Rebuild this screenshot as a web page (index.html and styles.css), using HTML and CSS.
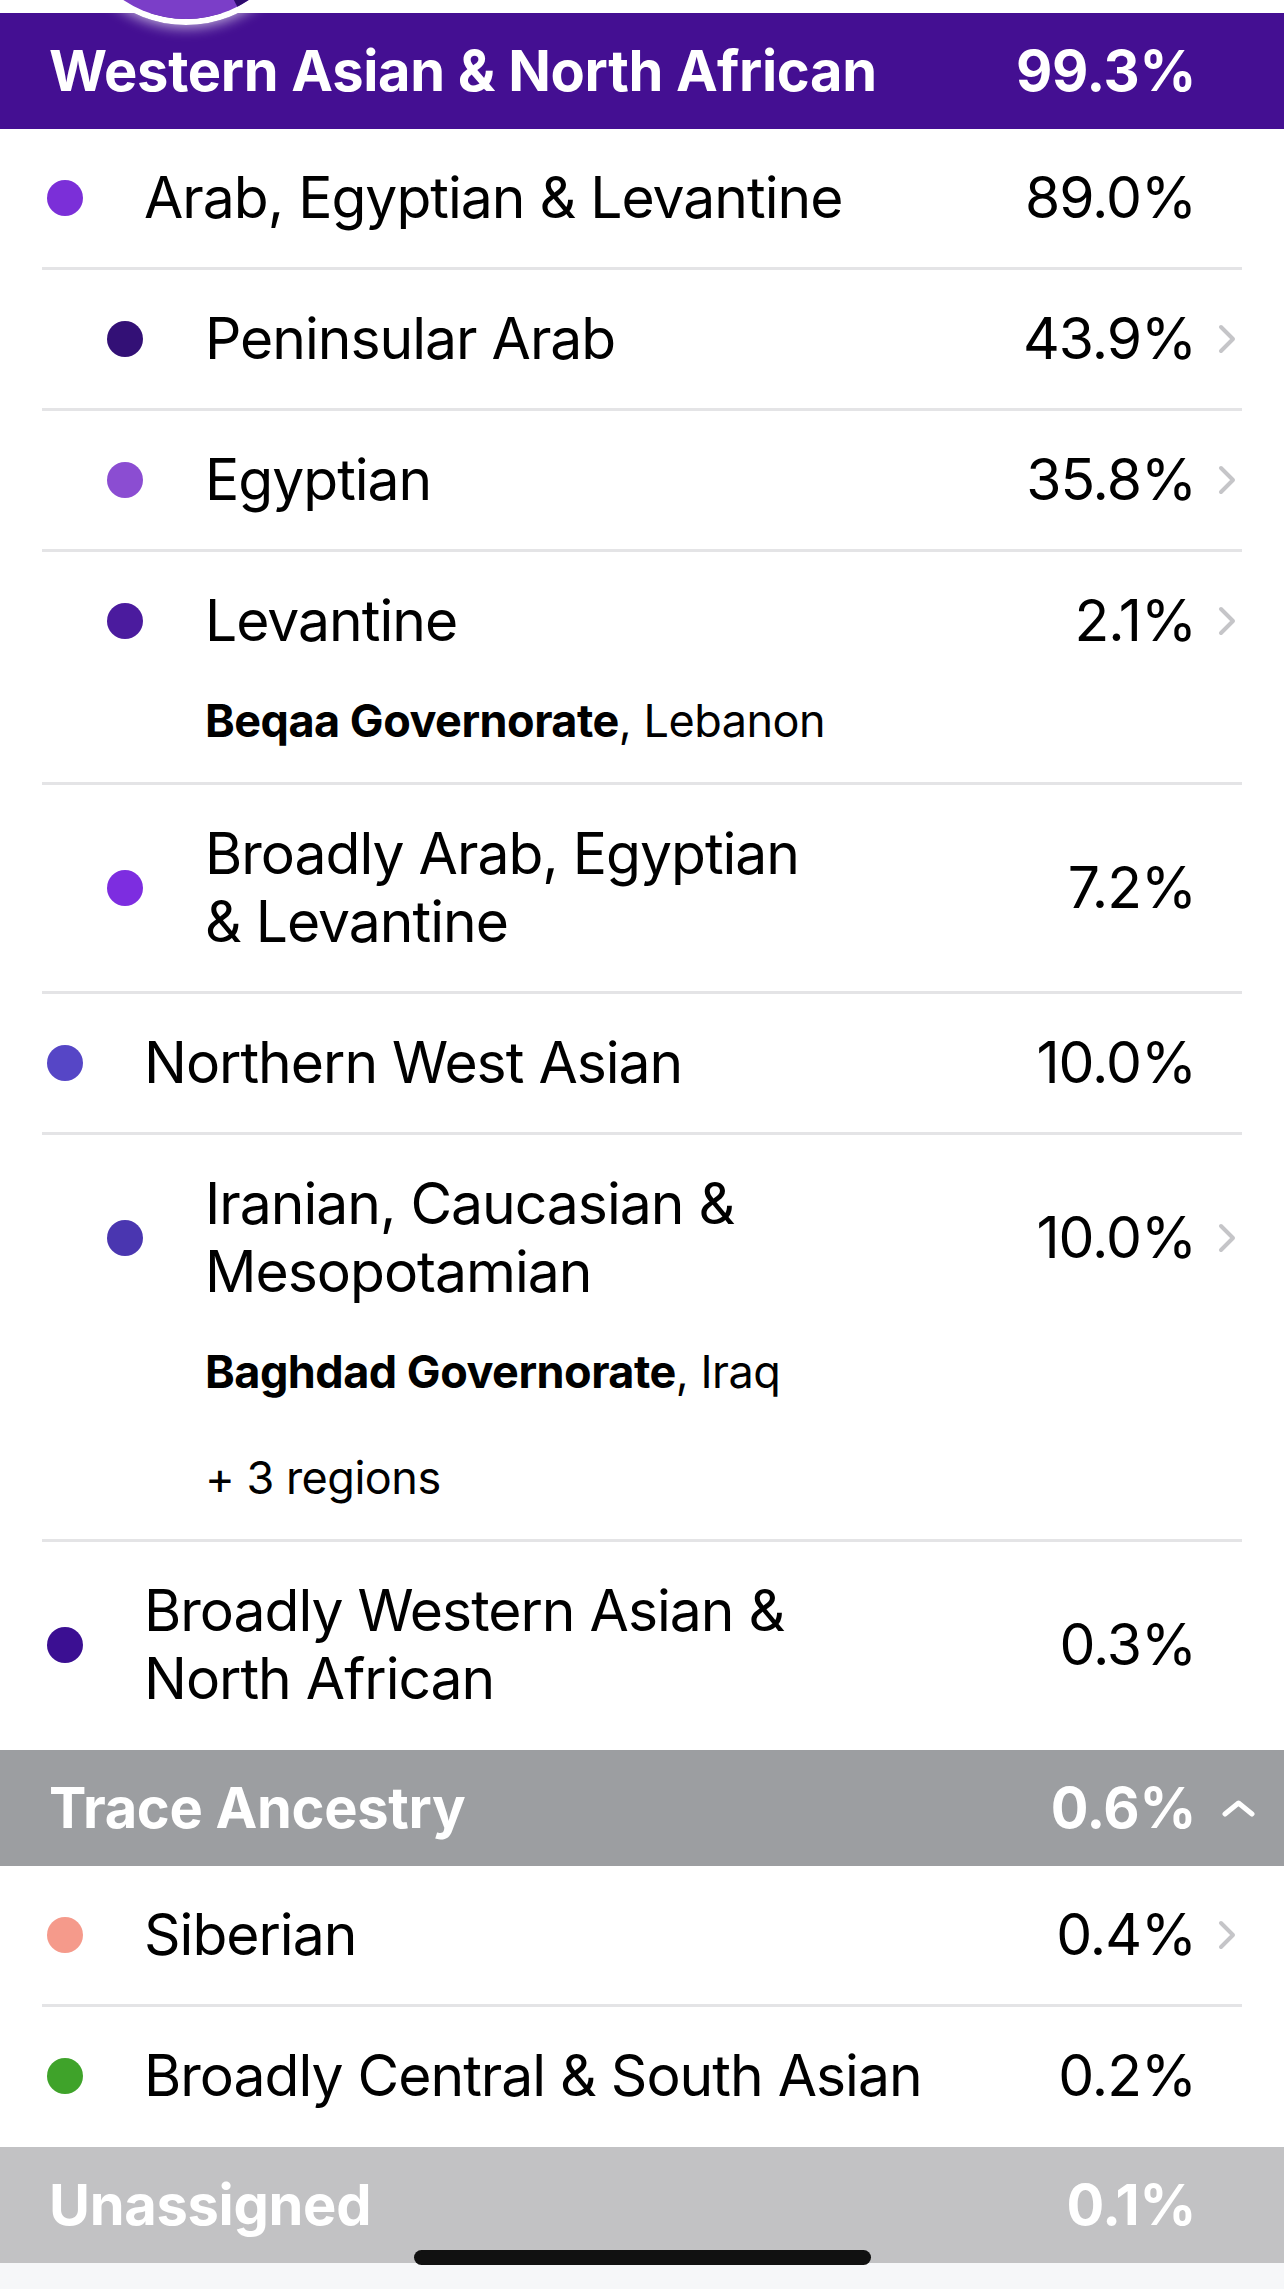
FILE: index.html
```html
<!DOCTYPE html>
<html lang="en">
<head>
    <meta charset="UTF-8">
    <meta name="viewport" content="width=device-width, initial-scale=1.0">
    <title>Ancestry Composition</title>
    <link rel="stylesheet" href="styles.css">
</head>
<body>
    <div class="page">
        <!-- donut chart, mostly scrolled off the top -->
        <div class="donut">
            <svg width="226" height="226" viewBox="0 0 226 226">
                <circle cx="113" cy="113" r="113" fill="#7b3ec8"/>
                <path d="M113 113 L164.3 213.7 A113 113 0 0 0 219.2 151.6 Z" fill="#2e0b6e"/>
            </svg>
        </div>

        <section class="group">
            <div class="group-head head-western">
                <span class="head-name">Western Asian &amp; North African</span>
                <span class="head-pct">99.3%</span>
                <span class="head-icon"></span>
            </div>
            <ul class="rows">
                <li class="row">
                    <div class="row-line">
                        <span class="dot dot-arab"></span>
                        <span class="label">Arab, Egyptian &amp; Levantine</span>
                        <span class="pct">89.0%</span>
                        <span class="chev"></span>
                    </div>
                </li>
                <li class="row nested">
                    <div class="row-line">
                        <span class="dot dot-peninsular"></span>
                        <span class="label">Peninsular Arab</span>
                        <span class="pct">43.9%</span>
                        <span class="chev"><svg width="18" height="30" viewBox="0 0 18 30"><path d="M3 3 L15 15 L3 27" /></svg></span>
                    </div>
                </li>
                <li class="row nested">
                    <div class="row-line">
                        <span class="dot dot-egyptian"></span>
                        <span class="label">Egyptian</span>
                        <span class="pct">35.8%</span>
                        <span class="chev"><svg width="18" height="30" viewBox="0 0 18 30"><path d="M3 3 L15 15 L3 27" /></svg></span>
                    </div>
                </li>
                <li class="row nested">
                    <div class="row-line">
                        <span class="dot dot-levantine"></span>
                        <span class="label">Levantine</span>
                        <span class="pct">2.1%</span>
                        <span class="chev"><svg width="18" height="30" viewBox="0 0 18 30"><path d="M3 3 L15 15 L3 27" /></svg></span>
                    </div>
                    <p class="sub"><b>Beqaa Governorate</b>, Lebanon</p>
                </li>
                <li class="row nested">
                    <div class="row-line">
                        <span class="dot dot-broad-arab"></span>
                        <span class="label">Broadly Arab, Egyptian<br>&amp; Levantine</span>
                        <span class="pct">7.2%</span>
                        <span class="chev"></span>
                    </div>
                </li>
                <li class="row">
                    <div class="row-line">
                        <span class="dot dot-nwa"></span>
                        <span class="label">Northern West Asian</span>
                        <span class="pct">10.0%</span>
                        <span class="chev"></span>
                    </div>
                </li>
                <li class="row nested">
                    <div class="row-line">
                        <span class="dot dot-iranian"></span>
                        <span class="label">Iranian, Caucasian &amp;<br>Mesopotamian</span>
                        <span class="pct">10.0%</span>
                        <span class="chev"><svg width="18" height="30" viewBox="0 0 18 30"><path d="M3 3 L15 15 L3 27" /></svg></span>
                    </div>
                    <p class="sub"><b>Baghdad Governorate</b>, Iraq</p>
                    <p class="sub more">+ 3 regions</p>
                </li>
                <li class="row">
                    <div class="row-line">
                        <span class="dot dot-broad-wana"></span>
                        <span class="label">Broadly Western Asian &amp;<br>North African</span>
                        <span class="pct">0.3%</span>
                        <span class="chev"></span>
                    </div>
                </li>
            </ul>
        </section>

        <section class="group">
            <div class="group-head head-trace">
                <span class="head-name">Trace Ancestry</span>
                <span class="head-pct">0.6%</span>
                <span class="head-icon"><svg width="33" height="17" viewBox="0 0 33 17"><path d="M3 14 L16.5 3 L30 14" /></svg></span>
            </div>
            <ul class="rows">
                <li class="row">
                    <div class="row-line">
                        <span class="dot dot-siberian"></span>
                        <span class="label">Siberian</span>
                        <span class="pct">0.4%</span>
                        <span class="chev"><svg width="18" height="30" viewBox="0 0 18 30"><path d="M3 3 L15 15 L3 27" /></svg></span>
                    </div>
                </li>
                <li class="row">
                    <div class="row-line">
                        <span class="dot dot-csa"></span>
                        <span class="label">Broadly Central &amp; South Asian</span>
                        <span class="pct">0.2%</span>
                        <span class="chev"></span>
                    </div>
                </li>
            </ul>
        </section>

        <section class="group">
            <div class="group-head head-unassigned">
                <span class="head-name">Unassigned</span>
                <span class="head-pct">0.1%</span>
                <span class="head-icon"></span>
            </div>
        </section>

        <div class="home-area"></div>
        <div class="home-indicator"></div>
    </div>
</body>
</html>
```

FILE: styles.css
```css
body {
    margin: 0;
    background: #fff;
    font-family: Inter, "Noto Sans", sans-serif;
    color: #000;
}
.page {
    position: relative;
    width: 1284px;
    padding-top: 13px;
    overflow: hidden;
}

/* donut chart peeking in from above */
.donut {
    position: absolute;
    left: 67px;
    top: -213px;
    width: 226px;
    height: 226px;
    border: 6px solid #fff;
    border-radius: 50%;
    box-shadow: 0 2px 14px rgba(255,255,255,0.7);
    z-index: 2;
}
.donut svg {
    display: block;
}

/* section headers */
.group-head {
    display: flex;
    align-items: center;
    height: 116px;
    padding: 0 29px 0 49px;
    color: #fff;
    font-size: 56px;
    font-weight: 700;
    letter-spacing: -0.3px;
}
.head-western {
    background: #440f92;
}
.head-trace {
    background: #9c9ea1;
}
.head-unassigned {
    background: #c2c2c4;
}
.head-name {
    flex: 1;
}
.head-icon {
    width: 59px;
    display: flex;
    justify-content: flex-end;
}
.head-icon svg path {
    fill: none;
    stroke: #fff;
    stroke-width: 5;
    stroke-linecap: round;
    stroke-linejoin: round;
}

/* list rows */
.rows {
    list-style: none;
    margin: 0;
    padding: 0;
}
.row {
    margin: 0 42px;
    padding: 35px 0;
    border-bottom: 3px solid #e4e4e6;
}
.row:last-child {
    padding-bottom: 37px;
    border-bottom: none;
}
.row-line {
    display: flex;
    align-items: center;
    font-size: 57px;
    line-height: 68px;
    letter-spacing: -1px;
}
.dot {
    flex: none;
    width: 36px;
    height: 36px;
    border-radius: 50%;
    margin: 0 61px 0 5px;
}
.nested .dot {
    margin: 0 62px 0 65px;
}
.label {
    flex: 1;
    white-space: nowrap;
}
.pct {
    flex: none;
}
.chev {
    flex: none;
    width: 46px;
    display: flex;
    justify-content: flex-end;
    padding-right: 6px;
    box-sizing: border-box;
}
.chev svg path {
    fill: none;
    stroke: #c5c5c8;
    stroke-width: 4;
    stroke-linecap: round;
    stroke-linejoin: round;
}
.sub {
    margin: 40px 0 0 0;
    padding-left: 163px;
    font-size: 45px;
    line-height: 52px;
    letter-spacing: -0.5px;
}
.sub b {
    font-weight: 700;
}
.sub.more {
    margin-top: 54px;
}

.dot-arab { background: #7b2fd8; }
.dot-peninsular { background: #331076; }
.dot-egyptian { background: #8b4dd2; }
.dot-levantine { background: #4b1b9e; }
.dot-broad-arab { background: #7d2de0; }
.dot-nwa { background: #5646c6; }
.dot-iranian { background: #4a36b0; }
.dot-broad-wana { background: #3b0f92; }
.dot-siberian { background: #f59a8b; }
.dot-csa { background: #3fa32a; }

/* bottom of the screen */
.home-area {
    height: 26px;
    background: #f6f7f9;
}
.home-indicator {
    position: absolute;
    left: 414px;
    bottom: 24px;
    width: 457px;
    height: 15px;
    border-radius: 8px;
    background: #111;
}
```
